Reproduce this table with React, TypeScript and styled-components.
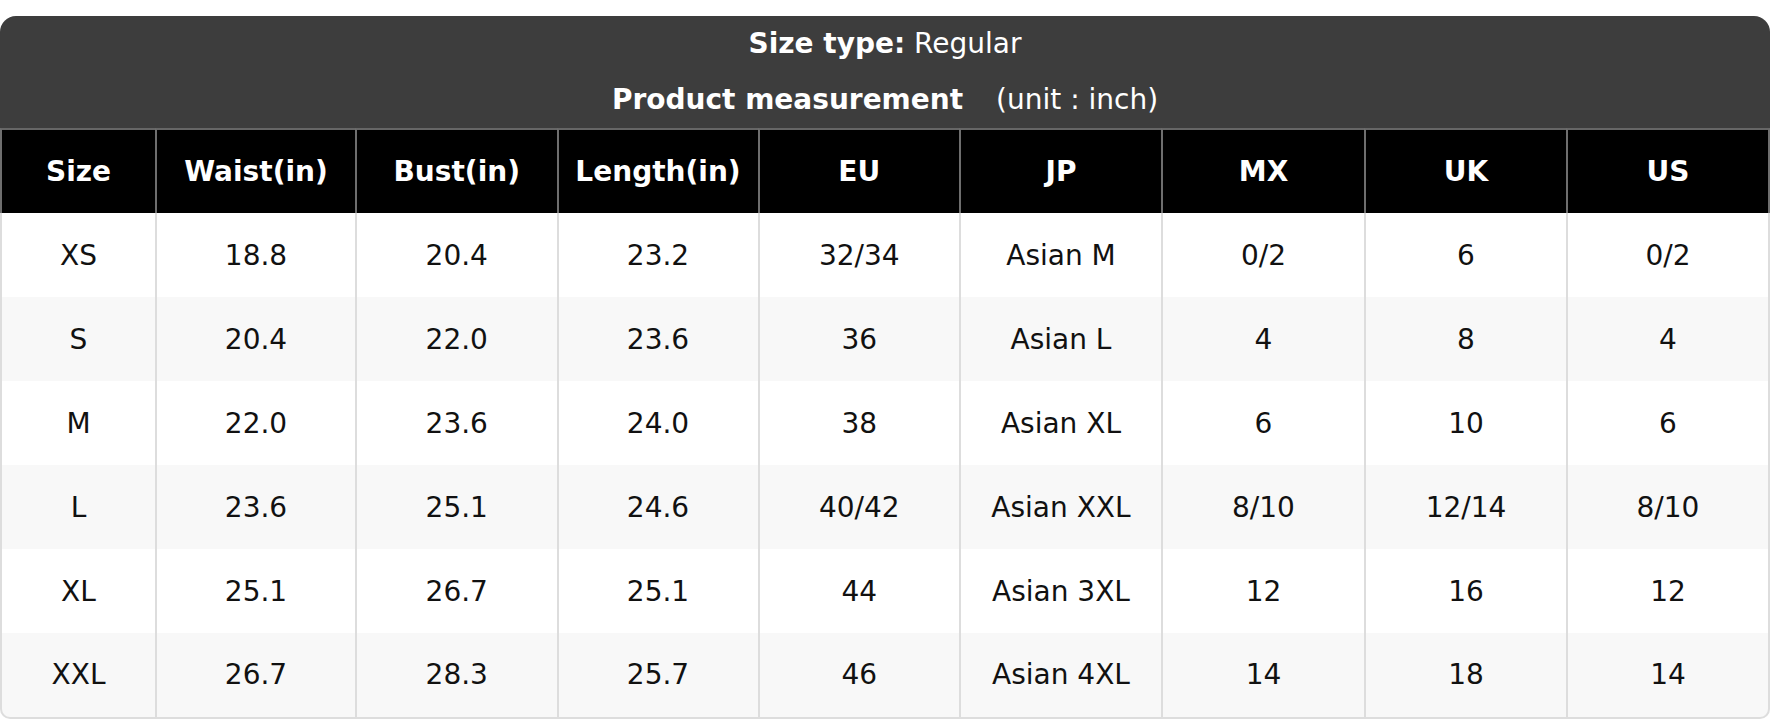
import React from "react";
import styled, { createGlobalStyle } from "styled-components";

const GlobalStyle = createGlobalStyle`
  html, body {
    margin: 0;
    padding: 0;
    background: #ffffff;
  }
  body {
    font-family: "DejaVu Sans", "Liberation Sans", sans-serif;
  }
  * { box-sizing: border-box; }
`;

const Page = styled.div`
  padding-top: 16px;
  width: 1770px;
`;

const Card = styled.section`
  display: flex;
  flex-direction: column;
`;

const Caption = styled.div`
  background: #3d3d3d;
  color: #ffffff;
  text-align: center;
  font-size: 28px;
  line-height: 56px;
  border-radius: 16px 16px 0 0;
`;

const CaptionLine = styled.div`
  white-space: nowrap;
`;

const Strong = styled.b`
  font-weight: 700;
`;

const Unit = styled.span`
  margin-left: 33px;
`;

const Grid = styled.div`
  display: grid;
  grid-template-columns: 155px 200px 201.5px 201px 201.5px 202px 203px 202px 204px;
`;

const HeadCell = styled.div<{ $last?: boolean }>`
  height: 85px;
  display: flex;
  align-items: center;
  justify-content: center;
  background: #000000;
  color: #ffffff;
  font-size: 28px;
  font-weight: 700;
  white-space: nowrap;
  border-top: 2px solid #666666;
  border-left: 2px solid #6e6e6e;
  border-right: ${(p) => (p.$last ? "2px solid #6e6e6e" : "none")};
`;

const BodyCell = styled.div<{
  $alt: boolean;
  $last?: boolean;
  $bottom?: boolean;
  $first?: boolean;
}>`
  height: ${(p) => (p.$bottom ? 86 : 84)}px;
  display: flex;
  align-items: center;
  justify-content: center;
  padding-bottom: ${(p) => (p.$bottom ? 2 : 0)}px;
  background: ${(p) => (p.$alt ? "#f8f8f8" : "#ffffff")};
  color: #111111;
  font-size: 28px;
  white-space: nowrap;
  border-left: 2px solid #dddddd;
  border-right: ${(p) => (p.$last ? "2px solid #dddddd" : "none")};
  border-bottom: ${(p) => (p.$bottom ? "2px solid #dddddd" : "none")};
  border-bottom-left-radius: ${(p) => (p.$bottom && p.$first ? "10px" : "0")};
  border-bottom-right-radius: ${(p) => (p.$bottom && p.$last ? "10px" : "0")};
`;

const headers = [
  "Size",
  "Waist(in)",
  "Bust(in)",
  "Length(in)",
  "EU",
  "JP",
  "MX",
  "UK",
  "US",
];

const rows: string[][] = [
  ["XS", "18.8", "20.4", "23.2", "32/34", "Asian M", "0/2", "6", "0/2"],
  ["S", "20.4", "22.0", "23.6", "36", "Asian L", "4", "8", "4"],
  ["M", "22.0", "23.6", "24.0", "38", "Asian XL", "6", "10", "6"],
  ["L", "23.6", "25.1", "24.6", "40/42", "Asian XXL", "8/10", "12/14", "8/10"],
  ["XL", "25.1", "26.7", "25.1", "44", "Asian 3XL", "12", "16", "12"],
  ["XXL", "26.7", "28.3", "25.7", "46", "Asian 4XL", "14", "18", "14"],
];

export default function App() {
  return (
    <>
      <GlobalStyle />
      <Page>
        <Card>
          <Caption>
            <CaptionLine>
              <Strong>Size type:</Strong> Regular
            </CaptionLine>
            <CaptionLine>
              <Strong>Product measurement</Strong>
              <Unit>(unit : inch)</Unit>
            </CaptionLine>
          </Caption>
          <Grid>
            {headers.map((h, i) => (
              <HeadCell key={h} $last={i === headers.length - 1}>
                {h}
              </HeadCell>
            ))}
            {rows.map((row, r) =>
              row.map((cell, c) => (
                <BodyCell
                  key={`${r}-${c}`}
                  $alt={r % 2 === 1}
                  $first={c === 0}
                  $last={c === row.length - 1}
                  $bottom={r === rows.length - 1}
                >
                  {cell}
                </BodyCell>
              ))
            )}
          </Grid>
        </Card>
      </Page>
    </>
  );
}
